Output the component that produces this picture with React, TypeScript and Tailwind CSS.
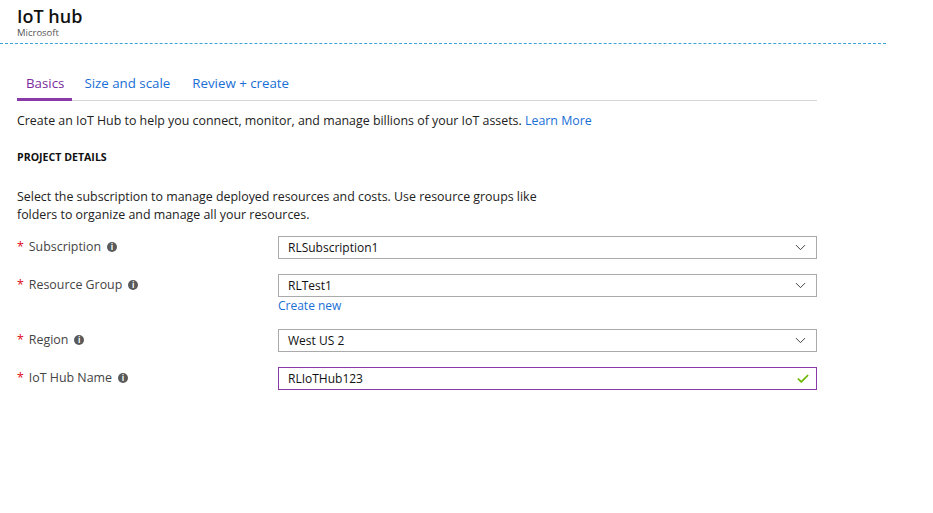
import { ChevronDown, Check } from "lucide-react";

const font = { fontFamily: '"Segoe UI", "Open Sans", sans-serif' };

function Info() {
  return (
    <span className="inline-flex w-[10px] h-[10px] rounded-full bg-[#5a5a5a] text-white text-[8px] font-bold items-center justify-center leading-none ml-[6px]">
      i
    </span>
  );
}

function Label({ text }: { text: string }) {
  return (
    <div className="w-[261px] flex items-center text-[12.4px] text-[#444] h-[20px] mt-[1px]">
      <span className="text-[#e00b1c] mr-[5px]">*</span>
      {text}
      <Info />
    </div>
  );
}

function Select({ value }: { value: string }) {
  return (
    <div className="w-[539px] h-[23px] border border-[#aaa] flex items-center justify-between pl-[9px] pr-[7px] text-[12px] text-[#111]">
      <span>{value}</span>
      <ChevronDown className="w-[17px] h-[17px] text-[#333]" strokeWidth={1.3} />
    </div>
  );
}

export default function App() {
  return (
    <div className="w-[933px] h-[513px] bg-white overflow-hidden" style={font}>
      <div className="pl-[17px] pt-[5px] h-[43px]">
        <div className="text-[18px] font-semibold text-[#111] leading-[22px]">IoT hub</div>
        <div className="text-[9.5px] text-[#555] leading-[11px]">Microsoft</div>
      </div>
      <div className="w-[886px] border-t border-dashed border-[#3aa2d9]" />

      <div className="px-[17px] w-[834px]">
        <div className="flex mt-[30px] border-b border-[#d6d6d6] text-[13.3px]">
          <div className="pl-[9px] pr-[8px] pb-[5px] text-[#7b2b9e] border-b-[3px] border-[#8a3aa8] -mb-[1px] leading-[19px]">
            Basics
          </div>
          <div className="pl-[12px] pr-[10px] pb-[5px] text-[#1a6fd6] leading-[19px]">Size and scale</div>
          <div className="px-[12px] pb-[5px] text-[#1a6fd6] leading-[19px]">Review + create</div>
        </div>

        <p className="mt-[11px] text-[12.4px] text-[#222] leading-[18px]">
          Create an IoT Hub to help you connect, monitor, and manage billions of your IoT assets.{" "}
          <span className="text-[#1a6fd6]">Learn More</span>
        </p>

        <div className="mt-[20px] text-[10.6px] font-bold text-[#111] leading-[14px]">PROJECT DETAILS</div>

        <p className="mt-[24px] text-[12.4px] text-[#222] leading-[18px] w-[540px]">
          Select the subscription to manage deployed resources and costs. Use resource groups like folders to organize and manage all your resources.
        </p>

        <div className="mt-[12px] flex flex-col">
          <div className="flex">
            <Label text="Subscription" />
            <Select value="RLSubscription1" />
          </div>
          <div className="flex mt-[15px]">
            <Label text="Resource Group" />
            <div className="flex flex-col">
              <Select value="RLTest1" />
              <span className="text-[12px] text-[#1a6fd6] mt-[1px] leading-[16px]">Create new</span>
            </div>
          </div>
          <div className="flex mt-[15px]">
            <Label text="Region" />
            <Select value="West US 2" />
          </div>
          <div className="flex mt-[15px]">
            <Label text="IoT Hub Name" />
            <div className="w-[539px] h-[23px] border border-[#8a3aa8] flex items-center justify-between pl-[9px] pr-[6px] text-[12px] text-[#111]">
              <span>RLIoTHub123</span>
              <Check className="w-[14px] h-[14px] text-[#6bb700]" strokeWidth={3} />
            </div>
          </div>
        </div>
      </div>
    </div>
  );
}
